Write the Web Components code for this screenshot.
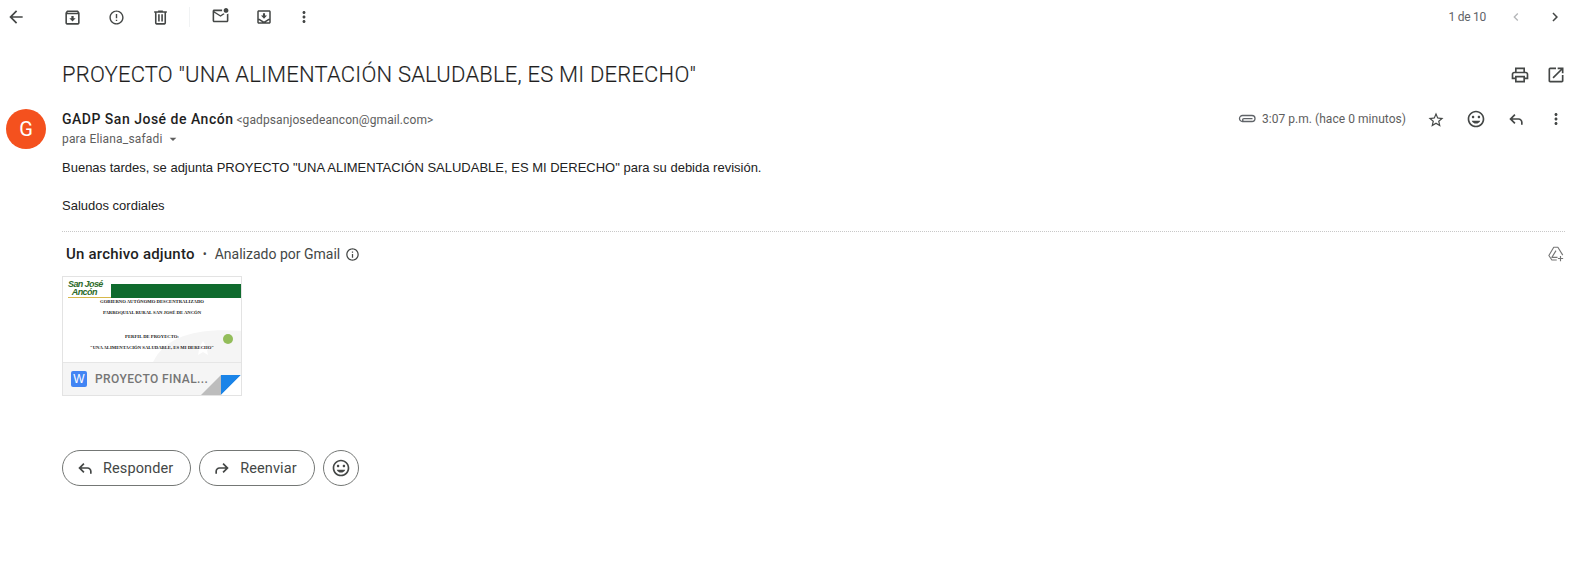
<!DOCTYPE html>
<html lang="es">
<head>
<meta charset="utf-8">
<title>Gmail</title>
<style>
  html, body { margin: 0; background: #fff; }
  body { font-family: Roboto, "Liberation Sans", sans-serif; color: #202124; }
</style>
</head>
<body>
<gm-toolbar></gm-toolbar>
<gm-subject>PROYECTO "UNA ALIMENTACIÓN SALUDABLE, ES MI DERECHO"</gm-subject>
<gm-message>
  <p>Buenas tardes, se adjunta PROYECTO "UNA ALIMENTACIÓN SALUDABLE, ES MI DERECHO" para su debida revisión.</p>
  <p>Saludos cordiales</p>
</gm-message>
<gm-attachments></gm-attachments>
<gm-actions></gm-actions>

<script>
const ICONS = {
  back: 'M20 11H7.83l5.59-5.59L12 4l-8 8 8 8 1.41-1.41L7.83 13H20v-2z',
  archive: 'M20.54 5.23l-1.39-1.68C18.88 3.21 18.47 3 18 3H6c-.47 0-.88.21-1.16.55L3.46 5.23C3.17 5.57 3 6.02 3 6.5V19c0 1.1.9 2 2 2h14c1.1 0 2-.9 2-2V6.5c0-.48-.17-.93-.46-1.27zM6.24 5h11.52l.81.97H5.44l.8-.97zM5 19V8h14v11H5zm8.45-9h-2.9v3H8l4 4 4-4h-2.55z',
  report: 'M11 15h2v2h-2zm0-8h2v6h-2zm.99-5C6.47 2 2 6.48 2 12s4.47 10 9.99 10C17.52 22 22 17.52 22 12S17.52 2 11.99 2zM12 20c-4.42 0-8-3.58-8-8s3.58-8 8-8 8 3.58 8 8-3.58 8-8 8z',
  trash: 'M15 4V3H9v1H4v2h1v13c0 1.1.9 2 2 2h10c1.1 0 2-.9 2-2V6h1V4h-5zm2 15H7V6h10v13zM9 8h2v9H9zm4 0h2v9h-2z',
  unread: 'M22 6.98V16c0 1.1-.9 2-2 2H4c-1.1 0-2-.9-2-2V4c0-1.1.9-2 2-2h10.1c-.06.32-.1.66-.1 1s.04.68.1 1H4l8 5 3.67-2.29c.47.43 1.02.76 1.63.98L12 11 4 6v10h16V7.9c.77-.15 1.45-.5 2-.92zM16 3c0 1.66 1.34 3 3 3s3-1.34 3-3-1.34-3-3-3-3 1.34-3 3z',
  inbox: 'M19 3H5c-1.1 0-2 .9-2 2v14c0 1.1.9 2 2 2h14c1.1 0 2-.9 2-2V5c0-1.1-.9-2-2-2zM5 5h14v9.2c-1.300 0-2.400.6-3.100 1.500L12 18l-3.900-2.300C7.400 14.800 6.300 14.200 5 14.200V5zm14 14H5v-2.800c.8 0 1.500.5 1.900 1.200L12 20.300l5.100-2.900c.4-.7 1.100-1.200 1.900-1.200V19zM13.400 7h-2.800v3H8l4 4.300 4-4.300h-2.600z',
  more: 'M12 8c1.1 0 2-.9 2-2s-.9-2-2-2-2 .9-2 2 .9 2 2 2zm0 2c-1.1 0-2 .9-2 2s.9 2 2 2 2-.9 2-2-.9-2-2-2zm0 6c-1.1 0-2 .9-2 2s.9 2 2 2 2-.9 2-2-.9-2-2-2z',
  prev: 'M15.41 7.41L14 6l-6 6 6 6 1.41-1.41L10.83 12z',
  next: 'M8.59 16.59L10 18l6-6-6-6-1.41 1.41L13.17 12z',
  print: 'M19 8h-1V3H6v5H5c-1.66 0-3 1.34-3 3v6h4v4h12v-4h4v-6c0-1.66-1.34-3-3-3zM8 5h8v3H8V5zm8 14H8v-4h8v4zm4-4h-2v-2H6v2H4v-4c0-.55.45-1 1-1h14c.55 0 1 .45 1 1v4z',
  open: 'M19 19H5V5h7V3H5a2 2 0 0 0-2 2v14c0 1.1.89 2 2 2h14c1.1 0 2-.9 2-2v-7h-2v7zM14 3v2h3.59l-9.83 9.83 1.41 1.41L19 6.41V10h2V3h-7z',
  star: 'M22 9.24l-7.19-.62L12 2 9.19 8.63 2 9.24l5.46 4.73L5.82 21 12 17.27 18.18 21l-1.63-7.03L22 9.24zM12 15.4l-3.76 2.27 1-4.28-3.32-2.88 4.38-.38L12 6.1l1.71 4.04 4.38.38-3.32 2.88 1 4.28L12 15.4z',
  mood: 'M11.99 2C6.47 2 2 6.48 2 12s4.47 10 9.99 10C17.52 22 22 17.52 22 12S17.52 2 11.99 2zM12 20c-4.42 0-8-3.58-8-8s3.58-8 8-8 8 3.58 8 8-3.58 8-8 8zm3.5-9c.83 0 1.5-.67 1.5-1.5S16.33 8 15.5 8 14 8.67 14 9.5s.67 1.5 1.5 1.5zm-7 0c.83 0 1.5-.67 1.5-1.5S9.33 8 8.5 8 7 8.67 7 9.5 7.67 11 8.5 11zm3.5 6.5c2.33 0 4.31-1.46 5.11-3.5H6.89c.8 2.04 2.78 3.5 5.11 3.5z',
  reply: 'M20 19h-2v-3c0-1.65-1.35-3-3-3H7.83l3.58 3.59L10 18l-6-6 6-6 1.41 1.41L7.83 11H15c2.76 0 5 2.24 5 5v3z',
  forward: 'M4 19h2v-3c0-1.65 1.35-3 3-3h7.17l-3.58 3.59L14 18l6-6-6-6-1.41 1.41L16.17 11H9c-2.76 0-5 2.24-5 5v3z',
  info: 'M11 7h2v2h-2zm0 4h2v6h-2zm1-9C6.48 2 2 6.48 2 12s4.48 10 10 10 10-4.48 10-10S17.52 2 12 2zm0 18c-4.41 0-8-3.59-8-8s3.59-8 8-8 8 3.59 8 8-3.59 8-8 8z',
  caret: 'M7 10l5 5 5-5z'
};

class GmIcon extends HTMLElement {
  constructor() {
    super();
    const shadow = this.attachShadow({ mode: 'open' });
    const size = this.getAttribute('size') || 18;
    const color = this.getAttribute('color') || '#444746';
    shadow.innerHTML = `
    <style>
      :host { display: inline-flex; width: ${size}px; height: ${size}px; flex: none; }
      svg { width: 100%; height: 100%; fill: ${color}; display: block; }
    </style>
    <svg viewBox="0 0 24 24"><path d="${ICONS[this.getAttribute('name')]}"/></svg>`;
  }
}
customElements.define('gm-icon', GmIcon);

class GmToolbar extends HTMLElement {
  constructor() {
    super();
    const shadow = this.attachShadow({ mode: 'open' });
    shadow.innerHTML = `
    <style>
      :host { display: flex; height: 34px; align-items: center; }
      .slot { width: 44px; display: flex; justify-content: center; }
      .back { margin-left: -6px; margin-right: 12px; }
      .sep { width: 1px; height: 20px; background: #f1f3f4; margin: 0 8px 0 7px; }
      .narrow { width: 36px; }
      .count { margin-left: auto; font: 12px Roboto, sans-serif; letter-spacing: -.25px; color: #5f6368; margin-right: 16px; }
      .pager { width: 28px; }
      .pager.first { margin-right: 11px; }
    </style>
    <div class="slot back"><gm-icon name="back" size="20"></gm-icon></div>
    <div class="slot"><gm-icon name="archive" size="19"></gm-icon></div>
    <div class="slot"><gm-icon name="report" size="17"></gm-icon></div>
    <div class="slot"><gm-icon name="trash" size="19"></gm-icon></div>
    <div class="sep"></div>
    <div class="slot"><gm-icon name="unread" size="19"></gm-icon></div>
    <div class="slot"><gm-icon name="inbox" size="18"></gm-icon></div>
    <div class="slot narrow"><gm-icon name="more" size="18"></gm-icon></div>
    <span class="count">1 de 10</span>
    <div class="slot pager first"><gm-icon name="prev" size="16" color="#b4b6b8"></gm-icon></div>
    <div class="slot pager"><gm-icon name="next" size="18"></gm-icon></div>`;
  }
}
customElements.define('gm-toolbar', GmToolbar);

class GmSubject extends HTMLElement {
  constructor() {
    super();
    const shadow = this.attachShadow({ mode: 'open' });
    shadow.innerHTML = `
    <style>
      :host { display: flex; align-items: center; height: 48px; padding: 16px 3px 0 62px; margin-top: 1px; }
      h1 { margin: 0; font: 300 22px/28px Roboto, sans-serif; letter-spacing: .2px; color: #1f1f1f; flex: 1; -webkit-text-stroke: .15px #1f1f1f; }
      .tools { display: flex; gap: 16px; align-items: center; }
    </style>
    <h1><slot></slot></h1>
    <div class="tools">
      <gm-icon name="print" size="20"></gm-icon>
      <gm-icon name="open" size="20"></gm-icon>
    </div>`;
  }
}
customElements.define('gm-subject', GmSubject);

class GmMessage extends HTMLElement {
  constructor() {
    super();
    const shadow = this.attachShadow({ mode: 'open' });
    shadow.innerHTML = `
    <style>
      :host { display: block; margin-top: 10px; }
      .row { display: flex; padding-left: 6px; padding-right: 3px; }
      .avatar { width: 40px; height: 40px; border-radius: 50%; background: #f4511e; color: #fff; font: 400 20px/40px Roboto, sans-serif; text-align: center; margin-right: 16px; flex: none; }
      .who { flex: 1; padding-top: 2px; }
      .from { font: 500 14px/16px Roboto, sans-serif; color: #1f1f1f; letter-spacing: .5px; display: block; height: 16px; }
      .addr { font: 400 12px Roboto, sans-serif; color: #5e5e5e; letter-spacing: .1px; margin-left: -1px; }
      .to { font: 400 12px/16px Roboto, sans-serif; letter-spacing: .17px; color: #5e5e5e; display: flex; align-items: center; margin-top: 4px; }
      .to gm-icon { margin-left: 2px; }
      .meta { display: flex; align-items: center; height: 20px; }
      .clip { width: 18px; height: 10px; margin-right: 6px; fill: none; stroke: #5f6368; stroke-width: 1.3; }
      .time { font: 12px Roboto, sans-serif; letter-spacing: .04px; color: #5e5e5e; margin-right: 10px; }
      .meta .cell { width: 40px; display: flex; justify-content: center; }
      .meta .cell:last-child { width: 20px; margin-left: 10px; }
      .meta .star { padding-top: 2px; }
      .body { padding: 9px 0 0 62px; font: 13px/19px "Liberation Sans", Arial, sans-serif; color: #222; }
      ::slotted(p) { margin: 0 0 19px; }
    </style>
    <div class="row">
      <div class="avatar">G</div>
      <div class="who">
        <span class="from">GADP San José de Ancón <span class="addr">&lt;gadpsanjosedeancon@gmail.com&gt;</span></span>
        <span class="to">para Eliana_safadi <gm-icon name="caret" size="16" color="#5e5e5e"></gm-icon></span>
      </div>
      <div class="meta">
        <svg class="clip" viewBox="0 0 18 10"><path d="M15 7.5H4.5a3 3 0 0 1 0-6H14a3 3 0 0 1 0 6H6a1.4 1.4 0 0 1 0-2.8h8.5"/></svg>
        <span class="time">3:07 p.m. (hace 0 minutos)</span>
        <div class="cell star"><gm-icon name="star" size="18"></gm-icon></div>
        <div class="cell"><gm-icon name="mood" size="20"></gm-icon></div>
        <div class="cell"><gm-icon name="reply" size="20"></gm-icon></div>
        <div class="cell"><gm-icon name="more" size="18"></gm-icon></div>
      </div>
    </div>
    <div class="body"><slot></slot></div>`;
  }
}
customElements.define('gm-message', GmMessage);

class GmAttachmentCard extends HTMLElement {
  constructor() {
    super();
    const shadow = this.attachShadow({ mode: 'open' });
    shadow.innerHTML = `
    <style>
      :host { display: block; width: 178px; height: 118px; border: 1px solid #e3e3e3; position: relative; overflow: hidden; }
      .page { height: 85px; background: #fff; position: relative; overflow: hidden; font: 700 4.7px/6px "Liberation Serif", serif; color: #222; text-align: center; }
      .content { position: relative; }
      .head { display: flex; padding: 4px 0 0 5px; height: 22px; box-sizing: border-box; }
      .logo { width: 43px; font: italic 700 9px/7.5px "Liberation Sans", sans-serif; color: #2d6b2a; text-align: left; border-bottom: 1px solid #d7b84a; height: 16px; letter-spacing: -.6px; white-space: nowrap; }
      .bar { flex: 1; height: 14px; margin-top: 3px; background: #0f6b2e; }
      .line { margin: 0 0 5px; white-space: nowrap; }
      .gap { height: 13px; }
      .ball { position: absolute; width: 10px; height: 10px; border-radius: 50%; left: 160px; top: 57px; background: #93bd5a; }
      .shade { position: absolute; left: 80px; top: 40px; width: 100px; height: 50px; }
      .chip { height: 33px; background: #f5f5f5; border-top: 1px solid #e6e6e6; display: flex; align-items: center; padding-left: 8px; gap: 8px; font: 500 12px Roboto, sans-serif; color: #757575; letter-spacing: .4px; box-sizing: border-box; }
      .word { width: 16px; height: 16px; border-radius: 2px; background: #4285f4; color: #fff; font: 400 12px/16px "Liberation Sans", sans-serif; text-align: center; letter-spacing: 0; }
      .fold { position: absolute; right: 0; bottom: 0; width: 40px; height: 20px; }
    </style>
    <div class="page">
      <svg class="shade" viewBox="0 0 100 50">
        <path d="M8 50 C18 22 48 10 100 14 V50 Z" fill="#f5f5f5"/>
        <path d="M60 24l3 5 5 1-4 3 1 5-5-3-5 3 1-5-4-3 5-1z" fill="#fff"/>
      </svg>
      <div class="content">
        <div class="head">
          <div class="logo">San José<br>&nbsp;&nbsp;Ancón</div>
          <div class="bar"></div>
        </div>
        <p class="line">GOBIERNO AUTÓNOMO DESCENTRALIZADO</p>
        <p class="line">PARROQUIAL RURAL SAN JOSÉ DE ANCÓN</p>
        <div class="gap"></div>
        <p class="line">PERFIL DE PROYECTO:</p>
        <p class="line">"UNA ALIMENTACIÓN SALUDABLE, ES MI DERECHO"</p>
      </div>
      <div class="ball"></div>
    </div>
    <div class="chip"><span class="word">W</span><span>PROYECTO FINAL...</span></div>
    <svg class="fold" viewBox="0 0 40 20">
      <path d="M0 20 L20 0 V20 Z" fill="#bdbdbd"/>
      <path d="M20 0 H40 L20 20 Z" fill="#1a84e8"/>
      <path d="M40 0 V20 H20 Z" fill="#fff"/>
    </svg>`;
  }
}
customElements.define('gm-attachment-card', GmAttachmentCard);

class GmAttachments extends HTMLElement {
  constructor() {
    super();
    const shadow = this.attachShadow({ mode: 'open' });
    shadow.innerHTML = `
    <style>
      :host { display: block; margin: -3px 4px 0 62px; border-top: 1px dotted #c8c8c8; }
      .title { display: flex; align-items: center; height: 44px; padding-left: 4px; font: 14px Roboto, sans-serif; color: #444746; }
      b { font-weight: 500; font-size: 15px; letter-spacing: .2px; color: #1f1f1f; }
      .dot { margin: 0 8px; font-size: 12px; }
      .grow { flex: 1; }
      gm-icon { margin-left: 5px; }
      .add { width: 18px; height: 18px; fill: none; stroke: #757575; stroke-width: 1.500; stroke-linejoin: round; }
    </style>
    <div class="title">
      <b>Un archivo adjunto</b><span class="dot">•</span><span>Analizado por Gmail</span>
      <gm-icon name="info" size="15"></gm-icon>
      <span class="grow"></span>
      <svg class="add" viewBox="0 0 24 24"><path d="M13 20H6.500L2.500 14 9 3h5.500l6.500 10.500M12 7.500l-5.500 9H14M18 14.500v7M14.500 18h7"/></svg>
    </div>
    <gm-attachment-card></gm-attachment-card>`;
  }
}
customElements.define('gm-attachments', GmAttachments);

class GmButton extends HTMLElement {
  constructor() {
    super();
    const shadow = this.attachShadow({ mode: 'open' });
    const icon = this.getAttribute('icon');
    shadow.innerHTML = `
    <style>
      :host { display: inline-flex; align-items: center; height: 36px; box-sizing: border-box; border: 1px solid #747775; border-radius: 18px; padding: 0 17px 0 12px; gap: 8px; font: 400 14.5px Roboto, sans-serif; color: #444746; letter-spacing: .1px; }
      :host([round]) { width: 36px; padding: 0; justify-content: center; }
    </style>
    <gm-icon name="${icon}" size="20"></gm-icon><slot></slot>`;
  }
}
customElements.define('gm-button', GmButton);

class GmActions extends HTMLElement {
  constructor() {
    super();
    const shadow = this.attachShadow({ mode: 'open' });
    shadow.innerHTML = `
    <style>
      :host { display: flex; gap: 8px; padding: 54px 0 0 62px; }
    </style>
    <gm-button icon="reply">Responder</gm-button>
    <gm-button icon="forward">Reenviar</gm-button>
    <gm-button icon="mood" round></gm-button>`;
  }
}
customElements.define('gm-actions', GmActions);
</script>
</body>
</html>
